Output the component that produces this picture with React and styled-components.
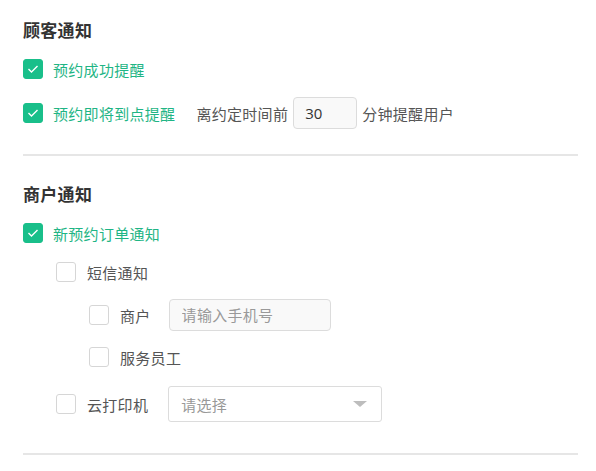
import React from 'react'
import styled, { createGlobalStyle } from 'styled-components'

const GlobalStyle = createGlobalStyle`
  body {
    margin: 0;
    background: #fff;
    font-family: "Open Sans", "Noto Sans CJK SC", sans-serif;
  }
`

function Checkbox({ checked }) {
  return (
    <Box checked={checked}>
      {checked && (
        <svg width="12" height="10" viewBox="0 0 12 10">
          <polyline points="1.5,5 4.5,8 10.5,2" fill="none" stroke="#fff" strokeWidth="1.4" />
        </svg>
      )}
    </Box>
  )
}

function Option({ checked, label, children }) {
  return (
    <>
      <Checkbox checked={checked} />
      <Label checked={checked}>{label}</Label>
      {children}
    </>
  )
}

export default function App() {
  return (
    <Page>
      <GlobalStyle />
      <Title>顾客通知</Title>
      <Row top={18}>
        <Option checked label="预约成功提醒" />
      </Row>
      <Row top={18} height={32}>
        <Option checked label="预约即将到点提醒">
          <Hint style={{ marginLeft: 21 }}>离约定时间前</Hint>
          <SmallInput defaultValue="30" />
          <Hint>分钟提醒用户</Hint>
        </Option>
      </Row>
      <Divider top={25} />

      <Title top={29}>商户通知</Title>
      <Row top={18}>
        <Option checked label="新预约订单通知" />
      </Row>
      <Row top={19} indent={33}>
        <Option label="短信通知" />
      </Row>
      <Row top={17} height={32} indent={66}>
        <Option label="商户">
          <PhoneInput placeholder="请输入手机号" />
        </Option>
      </Row>
      <Row top={16} indent={66}>
        <Option label="服务员工" />
      </Row>
      <Row top={19} height={36} indent={33}>
        <Option label="云打印机">
          <Select>
            <span>请选择</span>
            <Caret />
          </Select>
        </Option>
      </Row>
      <Divider top={31} />
    </Page>
  )
}

const Page = styled.div`
  width: 555px;
  padding: 21px 0 20px 23px;
`

const Title = styled.div`
  margin-top: ${(p) => p.top || 0}px;
  font-size: 17px;
  line-height: 20px;
  font-weight: 700;
  letter-spacing: 0.3px;
  color: #333;
`

const Row = styled.div`
  display: flex;
  align-items: center;
  height: ${(p) => p.height || 20}px;
  margin-top: ${(p) => p.top || 0}px;
  padding-left: ${(p) => p.indent || 0}px;
`

const Box = styled.span`
  box-sizing: border-box;
  width: 20px;
  height: 20px;
  flex: none;
  display: flex;
  align-items: center;
  justify-content: center;
  border-radius: 3px;
  background: ${(p) => (p.checked ? '#19bf8a' : '#fff')};
  border: 1px solid ${(p) => (p.checked ? '#19bf8a' : '#d6d6d6')};
`

const Label = styled.span`
  margin-left: ${(p) => (p.checked ? 10 : 11)}px;
  font-size: 15px;
  letter-spacing: 0.3px;
  color: ${(p) => (p.checked ? '#1fb585' : '#555')};
  white-space: nowrap;
`

const Hint = styled.span`
  font-size: 15px;
  letter-spacing: 0.3px;
  color: #555;
  white-space: nowrap;
`

const SmallInput = styled.input`
  box-sizing: border-box;
  width: 64px;
  height: 32px;
  margin: 0 5px;
  padding: 0 11px;
  border: 1px solid #dcdcdc;
  border-radius: 4px;
  background: #f9f9f9;
  font: inherit;
  font-size: 15px;
  color: #333;
  outline: none;
`

const PhoneInput = styled.input`
  box-sizing: border-box;
  width: 162px;
  height: 32px;
  margin-left: 18px;
  padding: 0 12px;
  border: 1px solid #dcdcdc;
  border-radius: 4px;
  background: #f9f9f9;
  font: inherit;
  font-size: 15px;
  letter-spacing: 0.3px;
  outline: none;
  &::placeholder {
    color: #999;
  }
`

const Select = styled.div`
  box-sizing: border-box;
  width: 214px;
  height: 36px;
  margin-left: 20px;
  padding: 0 12px;
  display: flex;
  align-items: center;
  justify-content: space-between;
  border: 1px solid #dcdcdc;
  border-radius: 3px;
  background: #fff;
  font-size: 15px;
  letter-spacing: 0.3px;
  color: #999;
`

const Caret = styled.span`
  width: 0;
  height: 0;
  margin-right: 2px;
  border-left: 7px solid transparent;
  border-right: 7px solid transparent;
  border-top: 6px solid #bdbdbd;
`

const Divider = styled.div`
  margin-top: ${(p) => p.top || 0}px;
  height: 2px;
  background: #e6e6e6;
`
